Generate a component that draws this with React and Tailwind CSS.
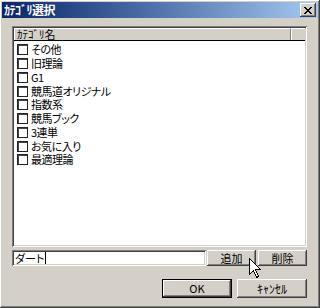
const items = ['その他', '旧理論', 'G1', '競馬道オリジナル', '指数系', '競馬ブック', '3連単', 'お気に入り', '最適理論'];

const raised = 'shadow-[inset_-1px_-1px_#404040,inset_1px_1px_#fff,inset_-2px_-2px_#808080,inset_2px_2px_#d4d0c8]';
const sunken = 'shadow-[inset_1px_1px_#808080,inset_-1px_-1px_#fff,inset_2px_2px_#404040,inset_-2px_-2px_#d4d0c8]';

const Button = ({ children, className = '' }) => (
  <div className={`flex items-center justify-center bg-[#d4d0c8] leading-none text-black ${className}`}>
    {children}
  </div>
);

const Cursor = () => (
  <svg className="absolute left-[249px] top-[258px]" width="13" height="21" viewBox="0 0 13 21">
    <path
      d="M0.5 0.5 L0.5 16.5 L4.5 12.5 L7.5 19.5 L9.5 18.5 L6.5 11.5 L11.5 11.5 Z"
      fill="#fff"
      stroke="#000"
      strokeWidth="1"
      shapeRendering="crispEdges"
    />
  </svg>
);

export default function App() {
  return (
    <div
      className={`relative w-[320px] h-[308px] bg-[#d4d0c8] p-[2px] flex flex-col ${raised}`}
      style={{ fontFamily: '"Noto Sans CJK JP", "Liberation Sans", sans-serif' }}
    >
      {/* title bar */}
      <div className="h-[16px] flex items-center justify-between pl-[2px] pr-[2px] bg-gradient-to-r from-[#0a246a] to-[#a6caf0]">
        <span className="text-white font-bold text-[12px] leading-none tracking-[-0.5px]">ｶﾃｺﾞﾘ選択</span>
        <div className={`w-[16px] h-[14px] bg-[#d4d0c8] flex items-center justify-center ${raised}`}>
          <svg width="8" height="7" viewBox="0 0 8 7" shapeRendering="crispEdges">
            <path d="M0 0h2v1h-2zM6 0h2v1h-2zM1 1h2v1h-2zM5 1h2v1h-2zM2 2h4v1h-4zM3 3h2v1h-2zM2 4h4v1h-4zM1 5h2v1h-2zM5 5h2v1h-2zM0 6h2v1h-2zM6 6h2v1h-2z" fill="#000" />
          </svg>
        </div>
      </div>

      <div className="flex flex-col pl-[10px] pr-[11px]">
        {/* list */}
        <div className={`mt-[8px] h-[221px] bg-white p-[2px] flex flex-col ${sunken}`}>
          <div className="flex h-[13px] border-b border-black">
            <div className="w-[277px] h-full flex items-center pl-[2px] bg-[#d4d0c8] border-t border-l border-white border-r border-r-[#808080]">
              <span className="text-[11px] leading-none">ｶﾃｺﾞﾘ名</span>
            </div>
            <div className="flex-1 h-full bg-[#d4d0c8] border-t border-l border-white" />
          </div>
          <div className="flex flex-col pt-[2px] pl-[3px] [font-feature-settings:'palt']">
            {items.map((name) => (
              <div key={name} className="h-[13.75px] flex items-center gap-[3px]">
                <div className="w-[11px] h-[11px] bg-white border border-[#222] shadow-[inset_1px_1px_#444]" />
                <span className="text-[11px] leading-none text-black tracking-[-0.5px]">{name}</span>
              </div>
            ))}
          </div>
        </div>

        {/* input row */}
        <div className="mt-[3px] flex h-[16px]">
          <div className={`w-[194px] h-full bg-white flex items-center pl-[3px] [font-feature-settings:'palt'] ${sunken}`}>
            <span className="text-[11px] leading-none">ダート</span>
            <span className="w-px h-[12px] bg-black ml-px" />
          </div>
          <Button className={`ml-[1px] w-[49px] h-full text-[11px] ${raised}`}>追加</Button>
          <Button className={`ml-[2px] w-[49px] h-full text-[11px] ${raised}`}>削除</Button>
        </div>

        {/* dialog buttons */}
        <div className="mt-[13px] flex justify-end gap-[5px]">
          <Button className="w-[70px] h-[19px] text-[11px] border border-black shadow-[inset_-1px_-1px_#404040,inset_1px_1px_#fff,inset_-2px_-2px_#808080]">OK</Button>
          <Button className={`w-[70px] h-[19px] text-[12px] ${raised}`}>ｷｬﾝｾﾙ</Button>
        </div>
      </div>

      <Cursor />
    </div>
  );
}
